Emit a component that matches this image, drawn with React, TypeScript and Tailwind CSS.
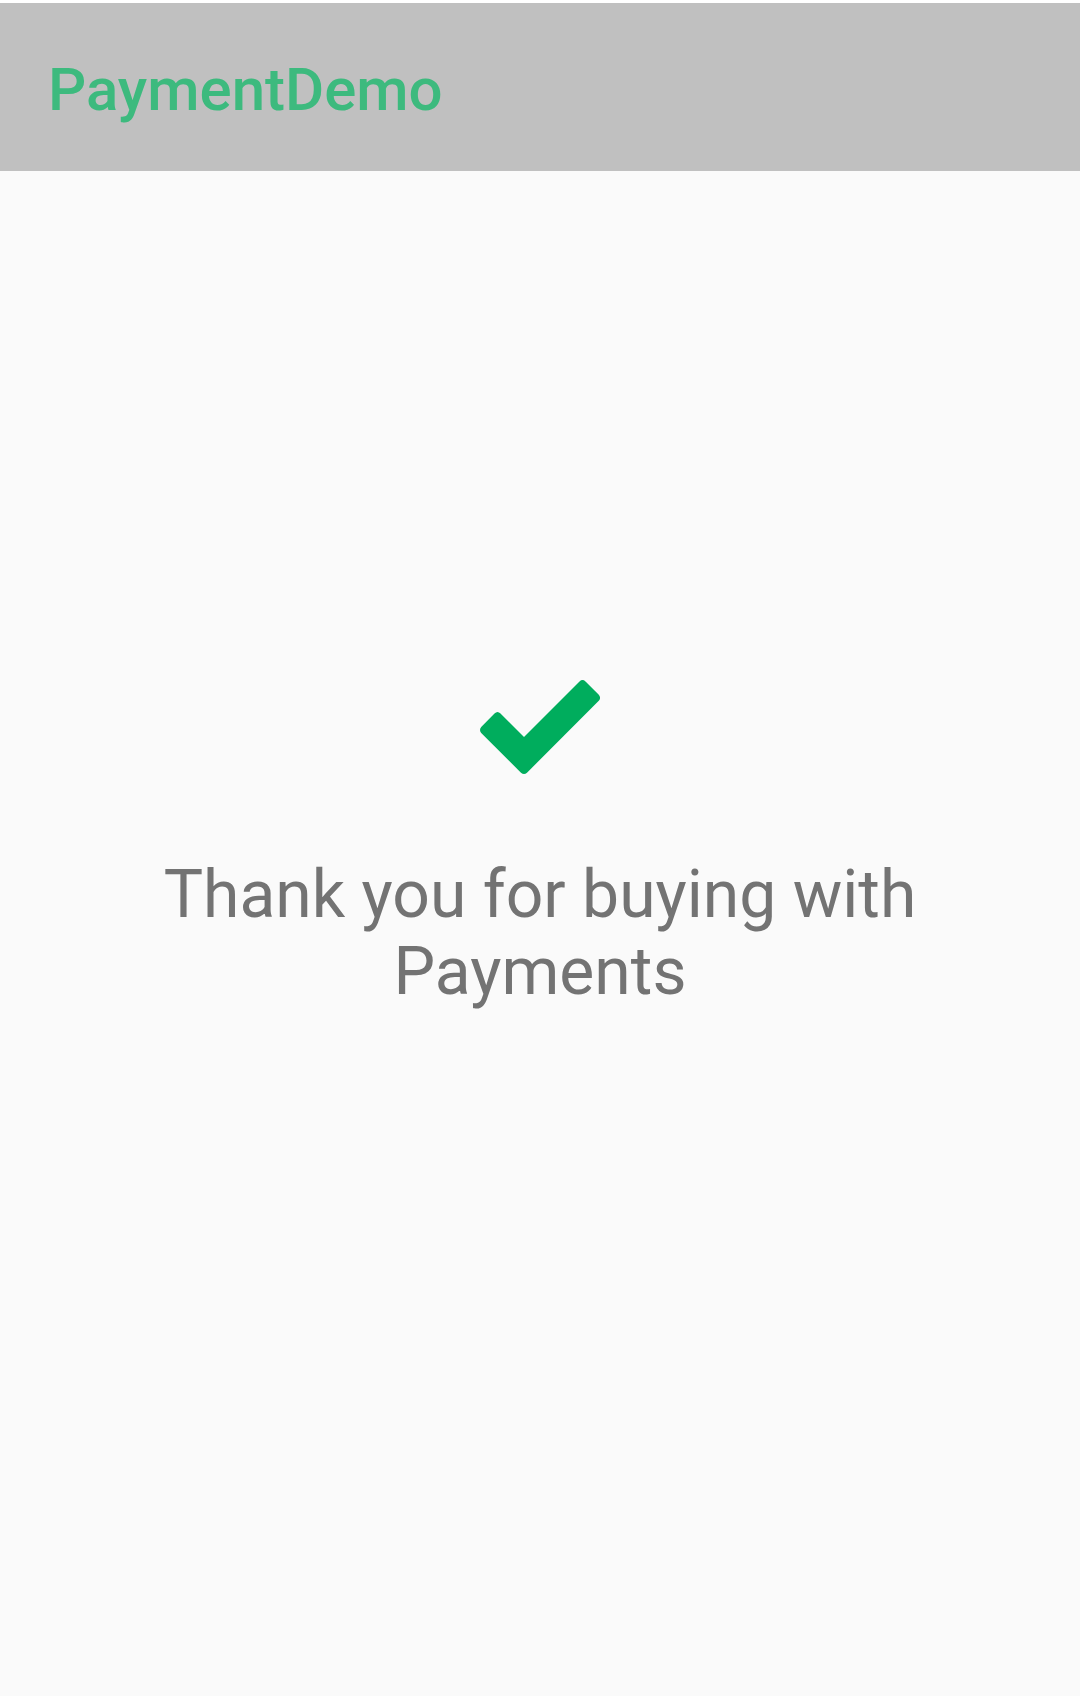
export default function App() {
  return (
    <div className="flex min-h-screen flex-col bg-[#fafafa] font-['Roboto',sans-serif]">
      <header className="border-t-3 border-white bg-[#c0c0c0] px-12 pt-[51px] pb-[45px]">
        <h1 className="text-[60px] leading-[72px] font-medium text-[#3dba7e]">PaymentDemo</h1>
      </header>
      <main className="flex flex-1 flex-col items-center px-12 pt-[509px] text-center">
        <svg className="h-[94px] w-[120px]" viewBox="0 0 120 94" fill="#00ad5d" role="img" aria-label="Success">
          <path d="M1.200 47 14.500 33.500Q17.500 30.500 20.500 33.500L44 57 99.500 1.500Q102.500-1.300 105.500 1.500L118.800 14.800Q121.300 17.800 118.800 20.800L47 92.700Q44 95.300 41 92.700L1.200 53Q-1.200 50 1.200 47Z" />
        </svg>
        <p className="mt-[82px] max-w-[840px] text-[66px] leading-[77px] text-[#737373]">
          Thank you for buying with Payments
        </p>
      </main>
    </div>
  );
}
